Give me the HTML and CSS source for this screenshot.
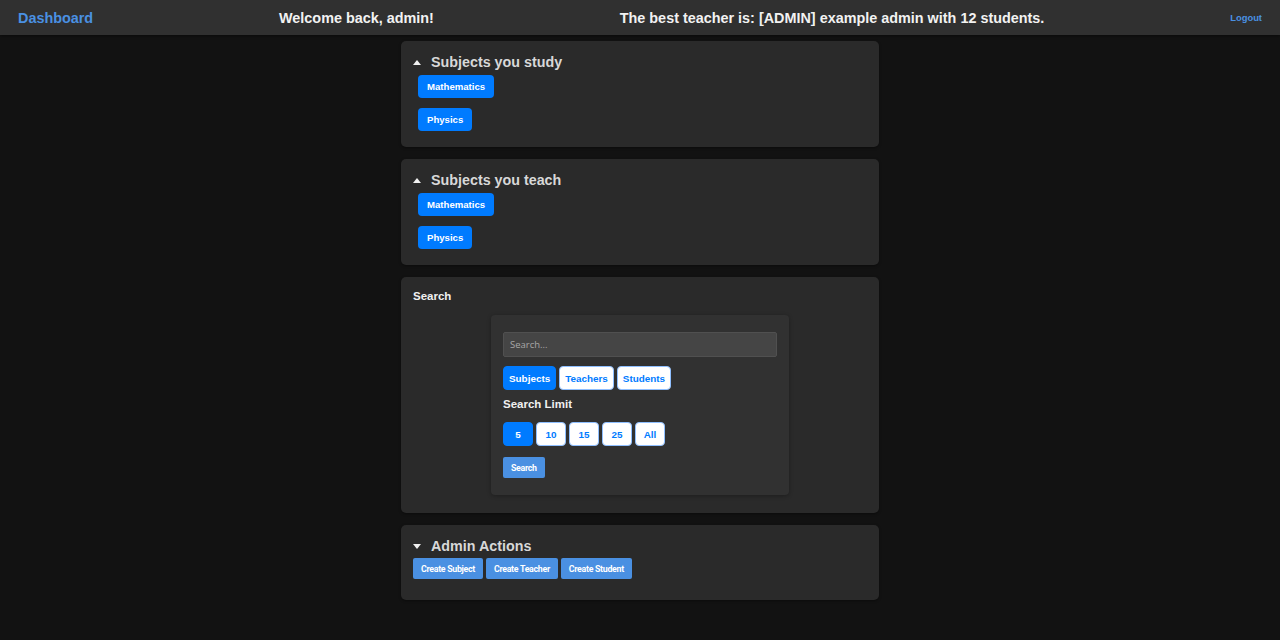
FILE: index.html
```html
<!DOCTYPE html>
<html>
<head>
<meta charset="utf-8">
<link rel="stylesheet" href="styles.css">
</head>
<body>
<header class="topbar">
  <a class="brand" href="#">Dashboard</a>
  <span class="welcome">Welcome back, admin!</span>
  <span class="best">The best teacher is: [ADMIN] example admin with 12 students.</span>
  <a class="logout" href="#">Logout</a>
</header>
<main class="content">
  <section class="card">
    <div class="summary"><span class="tri up"></span><span class="card-title">Subjects you study</span></div>
    <div class="subject-list">
      <button class="pill">Mathematics</button>
      <button class="pill">Physics</button>
    </div>
  </section>
  <section class="card">
    <div class="summary"><span class="tri up"></span><span class="card-title">Subjects you teach</span></div>
    <div class="subject-list">
      <button class="pill">Mathematics</button>
      <button class="pill">Physics</button>
    </div>
  </section>
  <section class="card search-card">
    <div class="search-label">Search</div>
    <div class="search-box">
      <input class="search-input" type="text" placeholder="Search...">
      <div class="btn-row">
        <button class="opt active">Subjects</button>
        <button class="opt">Teachers</button>
        <button class="opt">Students</button>
      </div>
      <div class="limit-label">Search Limit</div>
      <div class="btn-row limits">
        <button class="opt num active">5</button>
        <button class="opt num">10</button>
        <button class="opt num">15</button>
        <button class="opt num">25</button>
        <button class="opt num">All</button>
      </div>
      <button class="action">Search</button>
    </div>
  </section>
  <section class="card admin-card">
    <div class="summary"><span class="tri down"></span><span class="card-title">Admin Actions</span></div>
    <div class="btn-row admin-row">
      <button class="action">Create Subject</button>
      <button class="action">Create Teacher</button>
      <button class="action">Create Student</button>
    </div>
  </section>
</main>
</body>
</html>
```
FILE: styles.css
```css
* { box-sizing: border-box; }
html, body { margin: 0; padding: 0; }
body {
  background: #121212;
  font-family: "Liberation Sans", Arial, sans-serif;
  color: #e0e0e0;
  height: 640px;
  overflow: hidden;
}
.topbar {
  height: 35px;
  background: #303030;
  display: flex;
  align-items: center;
  justify-content: space-between;
  padding: 0 18px;
  box-shadow: 0 1px 3px rgba(0,0,0,0.5);
}
.brand {
  color: #4a90e2;
  text-decoration: none;
  font-weight: 700;
  font-size: 14.4px;
}
.welcome, .best {
  color: #f2f2f2;
  font-weight: 700;
  font-size: 14.4px;
}
.logout {
  color: #4a90e2;
  text-decoration: none;
  font-weight: 700;
  font-size: 9.4px;
}
.content {
  width: 478px;
  margin: 6px auto 0;
  display: flex;
  flex-direction: column;
  gap: 12px;
}
.card {
  background: #2a2a2a;
  border-radius: 5px;
  padding: 12px 12px 16px;
  box-shadow: 0 1px 3px rgba(0,0,0,0.4);
}
.summary {
  display: flex;
  align-items: center;
  height: 18px;
}
.tri {
  width: 0;
  height: 0;
  border-left: 4.5px solid transparent;
  border-right: 4.5px solid transparent;
  margin-right: 10px;
}
.tri.up { border-bottom: 5px solid #f0f0f0; }
.tri.down { border-top: 5px solid #f0f0f0; }
.card-title {
  font-size: 14.3px;
  font-weight: 700;
  color: #d8d8d8;
}
.subject-list {
  display: flex;
  flex-direction: column;
  align-items: flex-start;
  gap: 10px;
  padding: 4px 0 0 5px;
}
button {
  font-family: inherit;
  cursor: pointer;
}
.pill {
  background: #007bff;
  color: #fff;
  border: none;
  border-radius: 4px;
  height: 23px;
  padding: 0 9px;
  font-size: 9.6px;
  font-weight: 700;
}
.search-card { padding: 12px 12px 18px; }
.search-label {
  font-size: 11.5px;
  font-weight: 700;
  color: #f0f0f0;
  height: 14px;
  line-height: 14px;
}
.search-box {
  width: 298px;
  margin: 12px auto 0;
  background: #313131;
  border-radius: 4px;
  padding: 17px 12px 17px;
  box-shadow: 0 1px 4px rgba(0,0,0,0.3);
}
.search-input {
  display: block;
  width: 100%;
  height: 25px;
  background: #454545;
  border: 1px solid #505050;
  border-radius: 2px;
  padding: 0 6px;
  color: #ddd;
  font-family: "Open Sans", sans-serif;
  font-size: 9.5px;
  outline: none;
}
.search-input::placeholder { color: #a8a8a8; }
.btn-row {
  display: flex;
  gap: 3px;
}
.search-box .btn-row { margin-top: 9px; }
.opt {
  height: 24px;
  padding: 0 5px;
  border: 1px solid #8fbfff;
  background: #fff;
  color: #007bff;
  border-radius: 4px;
  font-size: 9.9px;
  font-weight: 700;
}
.opt.active {
  background: #007bff;
  border-color: #007bff;
  color: #fff;
}
.opt.num {
  width: 30px;
  padding: 0;
}
.limit-label {
  font-size: 11.5px;
  font-weight: 700;
  color: #f0f0f0;
  margin-top: 7px;
  line-height: 14px;
}
.search-box .btn-row.limits { margin-top: 11px; }
.action {
  background: #4a90e2;
  color: #fff;
  border: none;
  border-radius: 2px;
  height: 21px;
  padding: 0 8px;
  font-family: Roboto, "Open Sans", sans-serif;
  font-size: 8.8px;
  letter-spacing: -0.3px;
  font-weight: 700;
}
.search-box > .action { margin-top: 11px; }
.admin-card { padding: 12px 12px 21px; }
.admin-row { margin-top: 3px; }
```
